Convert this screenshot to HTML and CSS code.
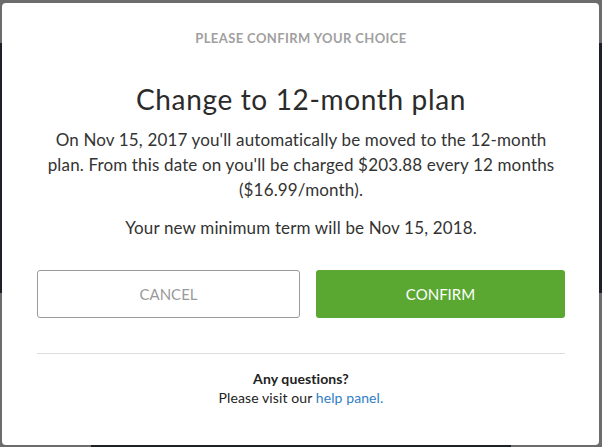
FILE: index.html
```html
<!DOCTYPE html>
<html>
<head>
<meta charset="utf-8">
<link rel="stylesheet" href="styles.css">
</head>
<body>
<div class="backdrop">
  <div class="modal">
    <div class="eyebrow">PLEASE CONFIRM YOUR CHOICE</div>
    <h1 class="title">Change to 12-month plan</h1>
    <p class="text">On Nov 15, 2017 you'll automatically be moved to the 12-month plan. From this date on you'll be charged $203.88 every 12 months ($16.99/month).</p>
    <p class="text term">Your new minimum term will be Nov 15, 2018.</p>
    <div class="actions">
      <button class="btn btn-cancel">CANCEL</button>
      <button class="btn btn-confirm">CONFIRM</button>
    </div>
    <div class="footer">
      <div class="q">Any questions?</div>
      <div class="visit">Please visit our <a class="link" href="#">help panel.</a></div>
    </div>
  </div>
</div>
</body>
</html>
```

FILE: styles.css
```css
html, body {
  margin: 0;
  padding: 0;
}
body {
  width: 602px;
  height: 447px;
  overflow: hidden;
  font-family: "Lato", "Open Sans", sans-serif;
  background:
    linear-gradient(to bottom, transparent 43px, #1d2026 43px, #1d2026 293px, transparent 293px),
    linear-gradient(to right, transparent 91px, #1d2026 91px, #1d2026 511px, transparent 511px) bottom / 100% 10px no-repeat,
    #6c6c6c;
}
.backdrop {
  padding: 3px 3px 2px 2px;
  height: 442px;
}
.modal {
  background: #fff;
  border-radius: 4px;
  height: 442px;
  box-sizing: border-box;
  padding: 27px 34px 0 35px;
  text-align: center;
  color: #333;
}
.eyebrow {
  font-size: 13px;
  font-weight: 700;
  color: #a0a0a0;
  line-height: 16px;
  letter-spacing: 0.4px;
}
.title {
  margin: 37px 0 0;
  font-size: 28px;
  font-weight: 400;
  line-height: 32px;
  letter-spacing: 0.65px;
  color: #2b2b2b;
}
.text {
  margin: 12px 0 0;
  font-size: 17px;
  line-height: 25px;
  letter-spacing: 0.15px;
}
.term {
  margin-top: 13px;
}
.actions {
  display: grid;
  grid-template-columns: 263px 249px;
  gap: 16px;
  margin-top: 30px;
}
.btn {
  height: 48px;
  border-radius: 3px;
  font-family: inherit;
  font-size: 15px;
  cursor: pointer;
}
.btn-cancel {
  background: #fff;
  border: 1px solid #9a9a9a;
  color: #9a9a9a;
}
.btn-confirm {
  background: #5aa832;
  border: none;
  color: #fff;
}
.footer {
  margin-top: 35px;
  border-top: 1px solid #dddddd;
  padding-top: 15px;
  font-size: 14px;
  line-height: 19px;
  letter-spacing: 0.1px;
}
.q {
  font-weight: 700;
  color: #222;
}
.visit {
  color: #222;
}
.link {
  color: #2f7ec5;
  text-decoration: none;
}
```
